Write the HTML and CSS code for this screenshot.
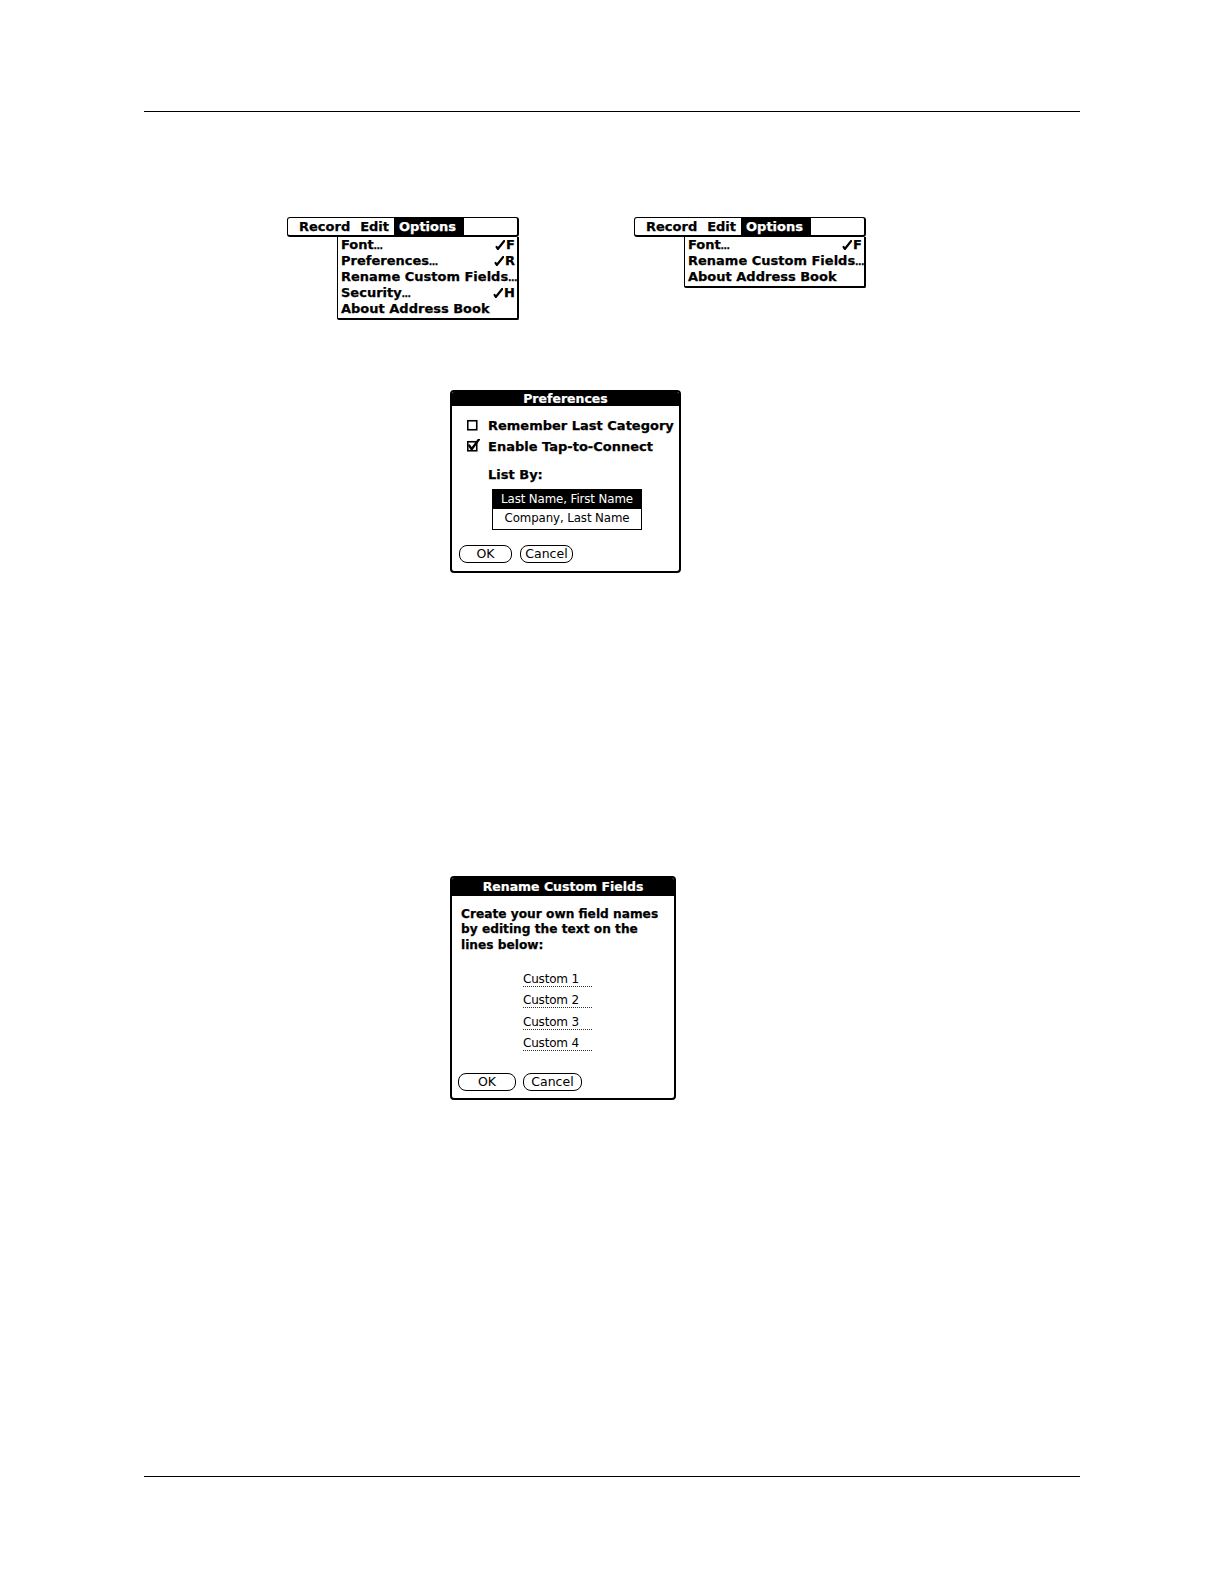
FILE: index.html
```html
<!DOCTYPE html>
<html>
<head>
<meta charset="utf-8">
<link rel="stylesheet" href="styles.css">
</head>
<body>
<div class="page">
  <div class="rule"></div>

  <div class="menus">
    <div class="menu">
      <div class="menubar"><span class="mi">Record</span><span class="mi">Edit</span><span class="mi sel">Options</span></div>
      <div class="dropdown">
        <div class="item"><span>Font<span class="ell">…</span></span><span class="sc"><svg class="stroke" viewBox="0 0 10 10"><path d="M1.6 7 L2.8 9 L9.2 1"/></svg>F</span></div>
        <div class="item"><span>Preferences<span class="ell">…</span></span><span class="sc"><svg class="stroke" viewBox="0 0 10 10"><path d="M1.6 7 L2.8 9 L9.2 1"/></svg>R</span></div>
        <div class="item"><span>Rename Custom Fields<span class="ell">…</span></span></div>
        <div class="item"><span>Security<span class="ell">…</span></span><span class="sc"><svg class="stroke" viewBox="0 0 10 10"><path d="M1.6 7 L2.8 9 L9.2 1"/></svg>H</span></div>
        <div class="item"><span>About Address Book</span></div>
      </div>
    </div>

    <div class="menu">
      <div class="menubar"><span class="mi">Record</span><span class="mi">Edit</span><span class="mi sel">Options</span></div>
      <div class="dropdown">
        <div class="item"><span>Font<span class="ell">…</span></span><span class="sc"><svg class="stroke" viewBox="0 0 10 10"><path d="M1.6 7 L2.8 9 L9.2 1"/></svg>F</span></div>
        <div class="item"><span>Rename Custom Fields<span class="ell">…</span></span></div>
        <div class="item"><span>About Address Book</span></div>
      </div>
    </div>
  </div>

  <div class="dialog prefs">
    <div class="dtitle">Preferences</div>
    <div class="pbody">
      <div class="cb"><svg class="box" viewBox="0 0 14 14"><rect x="0.75" y="2.75" width="9" height="9"/></svg><span>Remember Last Category</span></div>
      <div class="cb"><svg class="box" viewBox="0 0 14 14"><rect x="0.75" y="2.75" width="9" height="9"/><path class="tick" d="M2.3 6.6 L4.6 10.2 L11.8 0.6"/></svg><span>Enable Tap-to-Connect</span></div>
      <div class="label">List By:</div>
      <div class="list">
        <div class="opt on">Last Name, First Name</div>
        <div class="opt">Company, Last Name</div>
      </div>
      <div class="btns">
        <span class="btn">OK</span>
        <span class="btn">Cancel</span>
      </div>
    </div>
  </div>

  <div class="dialog rename">
    <div class="dtitle">Rename Custom Fields</div>
    <div class="rbody">
      <p class="intro">Create your own field names<br>by editing the text on the<br>lines below:</p>
      <div class="fields">
        <div class="frow"><span class="field">Custom 1</span></div>
        <div class="frow"><span class="field">Custom 2</span></div>
        <div class="frow"><span class="field">Custom 3</span></div>
        <div class="frow"><span class="field">Custom 4</span></div>
      </div>
      <div class="btns wide">
        <span class="btn">OK</span>
        <span class="btn">Cancel</span>
      </div>
    </div>
  </div>

  <div class="rule bottom"></div>
</div>
</body>
</html>
```

FILE: styles.css
```css
* { box-sizing: border-box; }
html, body { margin: 0; padding: 0; background: #fff; }
body { width: 1224px; height: 1584px; overflow: hidden; font-family: "DejaVu Sans", "Liberation Sans", sans-serif; color: #000; }

.page { padding: 111px 144px 0 144px; }
.rule { height: 0; border-top: 1.5px solid #000; }
.rule.bottom { margin-top: 376px; }

/* menus */
.menus { display: flex; gap: 115px; margin-top: 105px; padding-left: 143px; align-items: flex-start; }
.menu { width: 232px; }
.menubar {
  height: 20px;
  border: 1px solid #000;
  border-right-width: 2px;
  border-bottom-width: 2px;
  border-radius: 3px;
  padding-left: 6px;
  display: flex;
  font-weight: bold;
  font-size: 13px;
  line-height: 17px;
  -webkit-text-stroke: 0.25px #000;
}
.mi { padding: 0 5px; height: 17px; }
.mi.sel { background: #000; color: #fff; padding: 0 8px 0 5px; -webkit-text-stroke: 0.25px #fff; }

.dropdown {
  margin-left: 50px;
  width: 182px;
  border: 2px solid #000;
  border-top: 0;
  border-left-width: 1px;
  border-radius: 0 0 2px 2px;
  padding: 0 2px 1px 3px;
  font-weight: bold;
  font-size: 13px;
  -webkit-text-stroke: 0.25px #000;
}
.item { display: flex; justify-content: space-between; align-items: center; height: 16px; line-height: 16px; white-space: nowrap; }
.ell { font-size: 9px; letter-spacing: 0; }
.sc { display: flex; align-items: center; gap: 1px; }
.stroke { width: 10px; height: 10px; fill: none; stroke: #000; stroke-width: 2.2; stroke-linecap: round; stroke-linejoin: round; }

/* dialogs */
.dialog {
  margin-left: 306px;
  border: 2px solid #000;
  border-radius: 4px;
  overflow: hidden;
}
.dtitle {
  background: #000;
  color: #fff;
  text-align: center;
  font-weight: bold;
  font-size: 12.5px;
  -webkit-text-stroke: 0.2px #fff;
}

.prefs { width: 231px; margin-top: 69.5px; }
.prefs .dtitle { height: 14px; line-height: 14px; }
.pbody { padding: 9px 0 8px 0; }
.cb { display: flex; align-items: center; gap: 7px; height: 21px; padding-left: 15px; font-weight: bold; font-size: 13px; white-space: nowrap; -webkit-text-stroke: 0.25px #000; }
.box { width: 14px; height: 14px; flex: none; }
.box rect { fill: #fff; stroke: #000; stroke-width: 1.6; }
.box .tick { fill: none; stroke: #000; stroke-width: 2.4; stroke-linecap: round; stroke-linejoin: round; }
.label { margin-top: 8px; height: 20px; line-height: 20px; padding-left: 36px; font-weight: bold; font-size: 13px; -webkit-text-stroke: 0.25px #000; }
.list { margin: 4px 0 0 40px; width: 150px; border: 1px solid #000; }
.opt { height: 19.5px; line-height: 19.5px; text-align: center; font-size: 11.8px; white-space: nowrap; letter-spacing: -0.1px; }
.opt.on { background: #000; color: #fff; }

.btns { display: flex; gap: 8px; padding-left: 7px; margin-top: 15px; }
.btn {
  width: 53px;
  height: 18px;
  border: 1.5px solid #000;
  border-radius: 8px;
  text-align: center;
  font-size: 12.5px;
  line-height: 15px;
}

.rename { width: 226px; margin-top: 303px; }
.rename .dtitle { height: 18px; line-height: 18px; }
.rbody { padding: 11px 0 7px 0; }
.intro { margin: 0; padding-left: 9px; font-weight: bold; font-size: 12.2px; line-height: 15.5px; white-space: nowrap; -webkit-text-stroke: 0.25px #000; }
.fields { margin-top: 16px; }
.frow { height: 21.5px; display: flex; align-items: center; padding-left: 71px; }
.field { display: block; width: 69px; height: 14px; line-height: 13px; font-size: 12px; letter-spacing: -0.2px; border-bottom: 1px dotted #333; }
.btns.wide { gap: 7px; padding-left: 6px; margin-top: 18px; }
.btns.wide .btn { width: 58px; height: 18px; line-height: 15px; }
.btns.wide .btn + .btn { width: 59px; }
```
